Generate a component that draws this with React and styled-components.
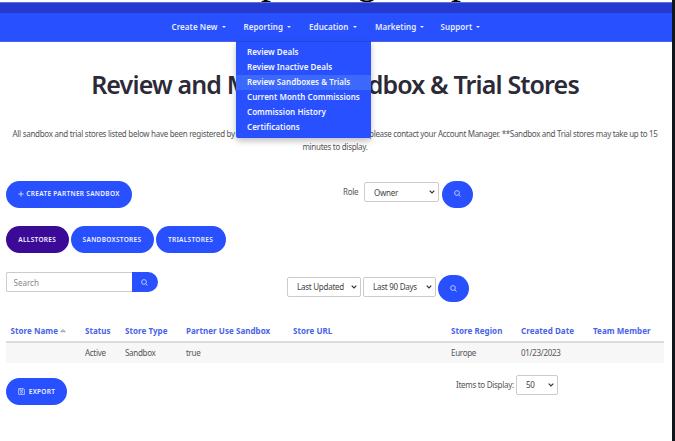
import React from "react";
import styled, { createGlobalStyle } from "styled-components";

const BLUE = "#2850ff";

const GlobalStyle = createGlobalStyle`
  *, *::before, *::after { box-sizing: border-box; }
  body { margin: 0; background: #fff; overflow: hidden; }
  button, input { font-family: inherit; }
`;

const Page = styled.div`
  width: 675px;
  height: 441px;
  overflow: hidden;
  border-right: 3px solid #11151c;
  background: #fff;
  color: #555;
  font: 400 8px/13px "Noto Sans", sans-serif;
  letter-spacing: -0.29px;
`;

/* Only the descenders of the caption above the bar reach into the page. */
const CaptionEdge = styled.div`
  display: flex;
  align-items: flex-end;
  gap: 73px;
  height: 2px;
  padding-left: 261px;
  overflow: hidden;
  color: #000;
  font: 40px/44px "Liberation Serif", serif;
`;
const Descender = styled.span`
  width: ${(p) => p.$w}px;
`;

const TopStrip = styled.div`
  height: 11px;
  background: #253bd0;
  border-top: 1px solid #5c70dc;
`;
const Nav = styled.nav`
  display: flex;
  height: 28.5px;
  padding-left: 171.5px;
  background: ${BLUE};
  border-bottom: 1px solid #4a63e8;
`;
const NavItem = styled.div`
  position: relative;
  width: ${(p) => p.$w}px;
  display: flex;
  align-items: center;
  gap: 4px;
  color: #e9edff;
  font-size: 8px;
  font-weight: 600;
  letter-spacing: 0.08px;
`;
const Caret = styled.i`
  margin-top: 1px;
  border: 2.5px solid transparent;
  border-top-color: #e9edff;
  border-bottom: 0;
`;
const Menu = styled.div`
  position: absolute;
  z-index: 2;
  top: 28px;
  left: -8px;
  width: 135.5px;
  height: 96.5px;
  padding-top: 3px;
  background: ${BLUE};
  border-top: 1px solid #2445dc;
  border-radius: 0 0 2px 2px;
  box-shadow: 0 3px 6px rgba(0, 0, 0, 0.25);
`;
const MenuItem = styled.div`
  height: 15px;
  padding-left: 11.5px;
  line-height: 13.5px;
  white-space: nowrap;
  color: #f6f8ff;
  letter-spacing: 0.04px;
  background: ${(p) => (p.$active ? "#3c68fb" : "transparent")};
`;

const Content = styled.main`
  display: flex;
  flex-direction: column;
  padding-left: 6px;
`;
const Title = styled.h1`
  margin: 24px 0 25px;
  width: 658px;
  text-align: center;
  white-space: nowrap;
  color: #2d2a38;
  font-size: 25px;
  line-height: 36px;
  font-weight: 600;
  letter-spacing: -0.86px;
`;
const Intro = styled.div`
  width: 658px;
  height: 27px;
  text-align: center;
  line-height: 13.5px;
  white-space: nowrap;
`;
const IntroLine = styled.div`
  display: flex;
  justify-content: space-between;
  padding: 0 6.5px;
`;
const IntroEnd = styled.span`
  letter-spacing: -0.33px;
`;

const Bar = styled.div`
  display: flex;
  align-items: flex-start;
  height: ${(p) => p.$h}px;
  margin-top: ${(p) => p.$top}px;
`;
const BarStart = styled.div`
  display: flex;
  gap: 2px;
  width: ${(p) => p.$w}px;
  padding-top: ${(p) => p.$drop || 0}px;
`;
const BarEnd = styled.div`
  display: flex;
  align-items: flex-start;
  gap: 2.5px;
`;
const Pill = styled.button`
  display: flex;
  align-items: center;
  justify-content: center;
  gap: ${(p) => p.$gap || 2}px;
  width: ${(p) => p.$w}px;
  height: 27px;
  padding: 0 0 1px;
  border: 0;
  border-radius: 13.5px;
  background: ${(p) => (p.$selected ? "#3b0a96" : BLUE)};
  color: #f0f3ff;
  font-size: 6.5px;
  font-weight: 600;
  letter-spacing: 0.3px;
  white-space: nowrap;
`;
const SelectBox = styled.div`
  display: flex;
  align-items: center;
  justify-content: space-between;
  width: ${(p) => p.$w}px;
  height: 20px;
  margin-top: 1.5px;
  padding: 0 3px 0 9px;
  border: 1px solid #ccc;
  border-radius: 2px;
  color: #444;
  font-size: 8px;
  letter-spacing: -0.25px;
  white-space: nowrap;
`;
const FieldLabel = styled.span`
  width: ${(p) => p.$w}px;
  line-height: 20px;
  margin-top: 1.5px;
  font-size: 8px;
  white-space: nowrap;
`;
const SearchField = styled.input`
  width: 126px;
  height: 20px;
  padding: 0 6.5px;
  border: 1px solid #ccc;
  border-right: 0;
  border-radius: 2px 0 0 2px;
  outline: 0;
  font-size: 8px;
  &::placeholder { color: #888; }
`;
const SearchButton = styled.button`
  display: flex;
  align-items: center;
  justify-content: center;
  width: 25.5px;
  height: 20px;
  margin-left: -2px;
  padding: 0;
  border: 0;
  border-radius: 0 10px 10px 0;
  background: ${BLUE};
`;

const columns = "74.5px 40px 61px 107px 158px 70px 72px 1fr";
const Table = styled.div`
  width: 658px;
  margin-top: 19px;
`;
const HeadRow = styled.div`
  display: grid;
  grid-template-columns: ${columns};
  height: 22px;
  padding-left: 4.5px;
  border-bottom: 2px solid #dcdcdc;
  color: #4863ea;
  font-size: 8px;
  font-weight: 700;
  letter-spacing: 0.05px;
  white-space: nowrap;
`;
const BodyRow = styled.div`
  display: grid;
  grid-template-columns: ${columns};
  height: 20px;
  padding-left: 4.5px;
  line-height: 20px;
  background: #f7f7f7;
  font-size: 8px;
`;
const HeadCell = styled.span`
  display: flex;
  align-items: center;
  height: 19px;
  gap: 2px;
`;

const SearchIcon = () => (
  <svg width="7" height="7" viewBox="0 0 7 7" fill="none" stroke="#dfe6ff" strokeWidth=".75">
    <circle cx="3" cy="3" r="2.4" />
    <path d="M4.7 4.8 6.6 6.6" />
  </svg>
);
const Chevron = () => (
  <svg width="6" height="4" viewBox="0 0 6 4" fill="none" stroke="#333" strokeWidth="1.2">
    <path d="M.7.7 3 3 5.3.7" />
  </svg>
);
const PlusIcon = () => (
  <svg width="6" height="6" viewBox="0 0 6 6" stroke="#e8edff" strokeWidth=".8">
    <path d="M3 .4v5.2M.4 3h5.2" />
  </svg>
);
const SaveIcon = () => (
  <svg width="7" height="7" viewBox="0 0 7 7" fill="none" stroke="#dfe6ff" strokeWidth=".7">
    <path d="M.6.6h4.8l1 1v4.8H.6zM2 .6v1.7h2.8V.6" />
    <circle cx="3.5" cy="4.3" r="1" />
  </svg>
);
const SortIcon = () => (
  <svg width="6" height="4" viewBox="0 0 6 4" fill="#ddd" stroke="#777" strokeWidth=".6">
    <path d="M3 .5 5.4 2.7H.6z" />
  </svg>
);
const Select = ({ w, children }) => (
  <SelectBox $w={w}>{children}<Chevron /></SelectBox>
);

const navItems = [["Create New", 72], ["Reporting", 65.5], ["Education", 66], ["Marketing", 65.5], ["Support", 60]];
const menuItems = ["Review Deals", "Review Inactive Deals", "Review Sandboxes & Trials", "Current Month Commissions", "Commission History", "Certifications"];
const heads = ["Store Name", "Status", "Store Type", "Partner Use Sandbox", "Store URL", "Store Region", "Created Date", "Team Member"];
const cells = ["", "Active", "Sandbox", "true", "", "Europe", "01/23/2023", ""];

export default function App() {
  return (
    <Page>
      <GlobalStyle />
      <CaptionEdge aria-hidden="true">
        <Descender $w={23}>p</Descender>
        <Descender $w={21}>g</Descender>
        <Descender $w={20}>p</Descender>
      </CaptionEdge>
      <TopStrip />
      <Nav>
        {navItems.map(([label, w]) => (
          <NavItem key={label} $w={w}>
            {label}
            <Caret />
            {label === "Reporting" && (
              <Menu>
                {menuItems.map((m) => (
                  <MenuItem key={m} $active={m === "Review Sandboxes & Trials"}>{m}</MenuItem>
                ))}
              </Menu>
            )}
          </NavItem>
        ))}
      </Nav>
      <Content>
        <Title>Review and Manage Sandbox &amp; Trial Stores</Title>
        <Intro>
          <IntroLine>
            <span>All sandbox and trial stores listed below have been registered by</span>
            <IntroEnd>please contact your Account Manager. **Sandbox and Trial stores may take up to 15</IntroEnd>
          </IntroLine>
          minutes to display.
        </Intro>

        <Bar $top={27} $h={27}>
          <BarStart $w={337}>
            <Pill $w={126}><PlusIcon />CREATE PARTNER SANDBOX</Pill>
          </BarStart>
          <BarEnd>
            <FieldLabel $w={18.5}>Role</FieldLabel>
            <Select w={75}>Owner</Select>
            <Pill $w={31} aria-label="Search"><SearchIcon /></Pill>
          </BarEnd>
        </Bar>

        <Bar $top={18.5} $h={27}>
          <BarStart $w={300}>
            <Pill $w={62.5} $selected>ALLSTORES</Pill>
            <Pill $w={83}>SANDBOXSTORES</Pill>
            <Pill $w={70}>TRIALSTORES</Pill>
          </BarStart>
        </Bar>

        <Bar $top={19} $h={30}>
          <BarStart $w={281}>
            <SearchField placeholder="Search" />
            <SearchButton aria-label="Search"><SearchIcon /></SearchButton>
          </BarStart>
          <BarStart $drop={3} $w={200}>
            <Select w={74}>Last Updated</Select>
            <Select w={73}>Last 90 Days</Select>
            <Pill $w={31} aria-label="Search"><SearchIcon /></Pill>
          </BarStart>
        </Bar>

        <Table>
          <HeadRow>
            {heads.map((h, i) => (
              <HeadCell key={h}>{h}{i === 0 && <SortIcon />}</HeadCell>
            ))}
          </HeadRow>
          <BodyRow>
            {cells.map((c, i) => <span key={i}>{c}</span>)}
          </BodyRow>
        </Table>

        <Bar $top={10} $h={32}>
          <BarStart $w={450} $drop={5}>
            <Pill $w={61} $gap={4}><SaveIcon />EXPORT</Pill>
          </BarStart>
          <BarEnd>
            <FieldLabel $w={57.5}>Items to Display:</FieldLabel>
            <Select w={42}>50</Select>
          </BarEnd>
        </Bar>
      </Content>
    </Page>
  );
}
